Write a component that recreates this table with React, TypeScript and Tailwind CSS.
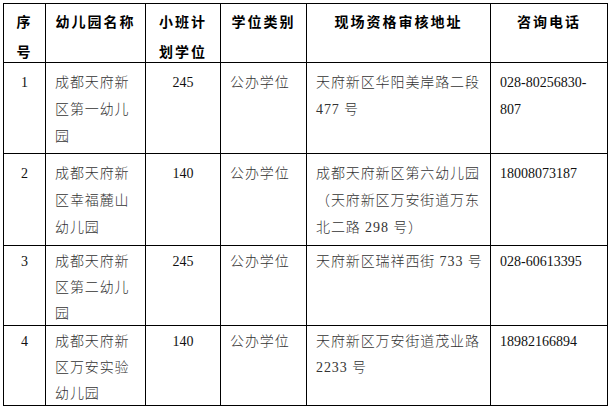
const header = [
  { lines: ['序', '号'] },
  { lines: ['幼儿园名称'] },
  { lines: ['小班计', '划学位'] },
  { lines: ['学位类别'] },
  { lines: ['现场资格审核地址'] },
  { lines: ['咨询电话'] },
];

const rows = [
  {
    no: '1',
    name: ['成都天府新', '区第一幼儿', '园'],
    seats: '245',
    type: '公办学位',
    addr: ['天府新区华阳美岸路二段', '477 号'],
    phone: ['028-80256830-', '807'],
    box: 'h-[91px] pt-[6px] leading-[27px]',
  },
  {
    no: '2',
    name: ['成都天府新', '区幸福麓山', '幼儿园'],
    seats: '140',
    type: '公办学位',
    addr: ['成都天府新区第六幼儿园', '（天府新区万安街道万东', '北二路 298 号）'],
    phone: ['18008073187'],
    box: 'h-[92px] pt-[6px] leading-[27px]',
  },
  {
    no: '3',
    name: ['成都天府新', '区第二幼儿', '园'],
    seats: '245',
    type: '公办学位',
    addr: ['天府新区瑞祥西街 733 号'],
    phone: ['028-60613395'],
    box: 'h-[80px] pt-[3px] leading-[26px]',
  },
  {
    no: '4',
    name: ['成都天府新', '区万安实验', '幼儿园'],
    seats: '140',
    type: '公办学位',
    addr: ['天府新区万安街道茂业路', '2233 号'],
    phone: ['18982166894'],
    box: 'h-[80px] pt-[3px] leading-[26px]',
  },
];

function Lines({ lines }: { lines: string[] }) {
  return (
    <>
      {lines.map((l, i) => (
        <div key={i} className="whitespace-nowrap">
          {l}
        </div>
      ))}
    </>
  );
}

export default function App() {
  const cell = 'border-r border-b border-black overflow-visible';
  const cjk = 'pl-[9px] tracking-[0.9px] font-light text-[#333]';
  return (
    <div className="w-[610px] h-[410px] bg-white pl-[3px] pt-[3px] font-['Liberation_Serif','Noto_Sans_CJK_SC',serif] text-[14px] text-[#111]">
      <div className="grid w-fit grid-cols-[42px_100px_75px_86px_184px_117px] border-l border-t border-black">
        {header.map((h, i) => (
          <div
            key={i}
            className={`${cell} h-[59px] pt-[4px] text-center leading-[30px] font-bold tracking-[2px] text-black`}
          >
            <Lines lines={h.lines} />
          </div>
        ))}

        {rows.map((r) => (
          <div key={r.no} className="contents">
            <div className={`${cell} ${r.box} text-center`}>{r.no}</div>
            <div className={`${cell} ${r.box} ${cjk}`}>
              <Lines lines={r.name} />
            </div>
            <div className={`${cell} ${r.box} text-center`}>{r.seats}</div>
            <div className={`${cell} ${r.box} ${cjk}`}>{r.type}</div>
            <div className={`${cell} ${r.box} ${cjk}`}>
              <Lines lines={r.addr} />
            </div>
            <div className={`${cell} ${r.box} pl-[9px]`}>
              <Lines lines={r.phone} />
            </div>
          </div>
        ))}
      </div>
    </div>
  );
}
